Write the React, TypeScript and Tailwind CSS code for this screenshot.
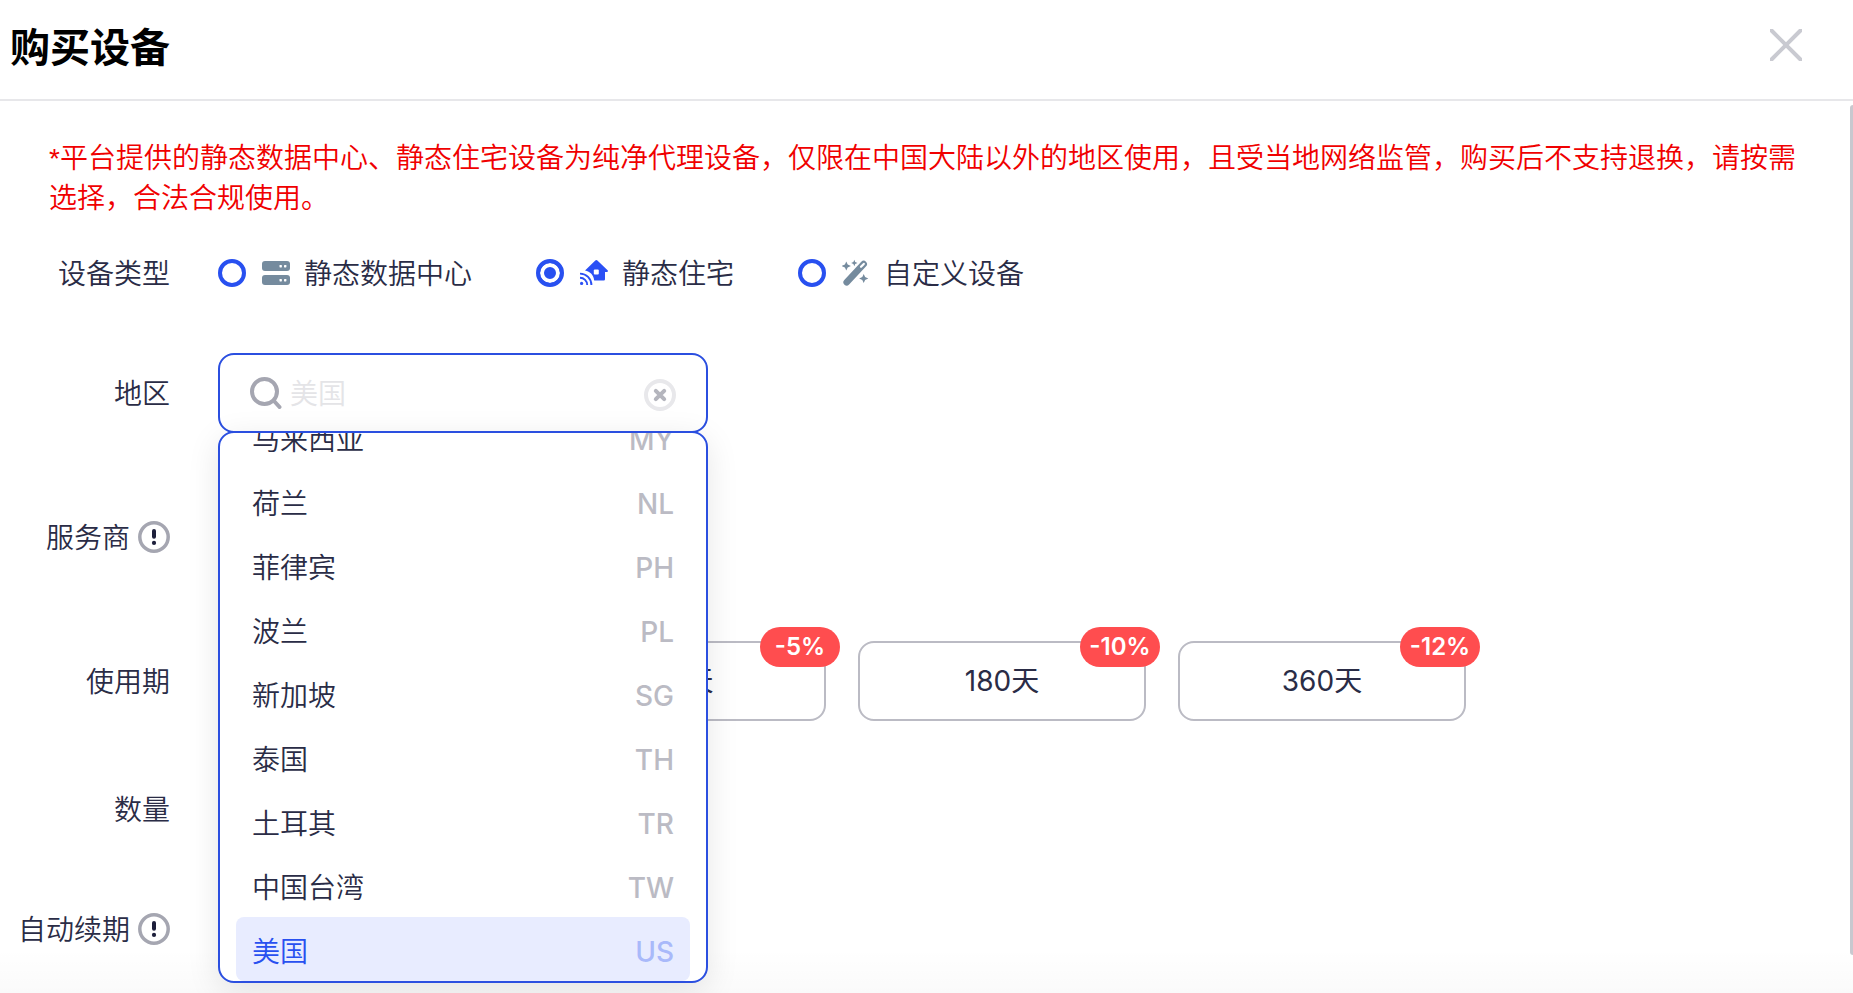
import React from "react";

const countries = [
  { name: "马来西亚", code: "MY" },
  { name: "荷兰", code: "NL" },
  { name: "菲律宾", code: "PH" },
  { name: "波兰", code: "PL" },
  { name: "新加坡", code: "SG" },
  { name: "泰国", code: "TH" },
  { name: "土耳其", code: "TR" },
  { name: "中国台湾", code: "TW" },
  { name: "美国", code: "US" },
];

const periods = [
  { label: "30天", discount: "" },
  { label: "90天", discount: "-5%" },
  { label: "180天", discount: "-10%" },
  { label: "360天", discount: "-12%" },
];

function ServerIcon() {
  return (
    <svg aria-hidden="true" className="size-7" viewBox="0 0 28 28">
      <rect x="0" y="2" width="28" height="10" rx="3" fill="#758b9e" />
      <rect x="0" y="16" width="28" height="10" rx="3" fill="#758b9e" />
      <g fill="#fff">
        <rect x="17.5" y="6" width="2.4" height="2.4" rx="0.6" />
        <rect x="22" y="6" width="2.4" height="2.4" rx="0.6" />
        <rect x="17.5" y="20" width="2.4" height="2.4" rx="0.6" />
        <rect x="22" y="20" width="2.4" height="2.4" rx="0.6" />
      </g>
    </svg>
  );
}

function HouseIcon() {
  return (
    <svg aria-hidden="true" className="size-7" viewBox="0 0 28 28">
      <path
        d="M15.3 1.5a1.5 1.5 0 0 1 2.1 0L27.6 11.3c.6.6.2 1.7-.7 1.7H25v7.2a1.2 1.2 0 0 1-1.2 1.2H14.2C13.6 16.2 10.3 12.4 5 11.5Z"
        fill="#2b50f5"
      />
      <rect x="13.8" y="10.6" width="5" height="5" rx="1" fill="#fff" />
      <circle cx="1.6" cy="24.4" r="1.6" fill="#2b50f5" />
      <g fill="none" stroke="#2b50f5" strokeWidth="1.9">
        <path d="M0 18.8a7.2 7.2 0 0 1 7.2 7.2" />
        <path d="M0 14.6A11.4 11.4 0 0 1 11.4 26" />
      </g>
    </svg>
  );
}

function WandIcon() {
  return (
    <svg aria-hidden="true" className="size-7" viewBox="0 0 28 28">
      <path d="M4.7 23.3 21.7 5.1" stroke="#758b9e" strokeWidth="6.6" strokeLinecap="round" />
      <path d="m19 7.8 2.8-2.9" stroke="#fff" strokeWidth="2.2" strokeLinecap="round" />
      <g fill="#758b9e">
        <path d="M4.3 2.4 5.7 5.6 8.9 7 5.7 8.4 4.3 11.6 2.9 8.4-.3 7l3.2-1.4Z" />
        <path d="m12.3.8.9 2.3 2.3.9-2.3.9-.9 2.3-.9-2.3L9.1 4l2.3-.9Z" />
        <path d="m21.7 14.9 1.4 3.2 3.2 1.4-3.2 1.4-1.4 3.2-1.4-3.2-3.2-1.4 3.2-1.4Z" />
      </g>
    </svg>
  );
}

function InfoIcon() {
  return (
    <svg aria-hidden="true" className="size-8" viewBox="0 0 32 32">
      <circle cx="16" cy="16" r="14.2" fill="#fff" stroke="#a5a6b1" strokeWidth="3.5" />
      <path d="M16 10v5.8" stroke="#1d1f3b" strokeWidth="4" strokeLinecap="round" />
      <circle cx="16" cy="21.9" r="2.1" fill="#1d1f3b" />
    </svg>
  );
}

const deviceTypes = [
  { label: "静态数据中心", icon: <ServerIcon />, selected: false },
  { label: "静态住宅", icon: <HouseIcon />, selected: true },
  { label: "自定义设备", icon: <WandIcon />, selected: false },
];

function RowLabel({ text, info, htmlFor }: { text: string; info?: boolean; htmlFor?: string }) {
  return (
    <div className="flex w-[170px] shrink-0 items-center justify-end gap-2">
      <label htmlFor={htmlFor} className="pt-0.5 whitespace-nowrap">
        {text}
      </label>
      {info && (
        <button type="button" aria-label={text + "说明"}>
          <InfoIcon />
        </button>
      )}
    </div>
  );
}

export default function App() {
  return (
    <div className="flex h-screen flex-col overflow-hidden bg-white font-['Inter','Noto_Sans_CJK_SC',sans-serif] text-[28px] leading-10 font-[350] text-[#2a2c46]">
      <header className="flex h-[101px] shrink-0 items-center justify-between border-b-2 border-[#e7e7ea] pr-[51px] pb-1 pl-2.5">
        <h1 className="text-[40px] font-bold text-black">购买设备</h1>
        <button type="button" aria-label="关闭" className="mb-1.5">
          <svg aria-hidden="true" className="size-8" viewBox="0 0 32 32">
            <path d="M1.5 1.5l29 29M30.5 1.5l-29 29" stroke="#c9cad1" strokeWidth="4" strokeLinecap="round" />
          </svg>
        </button>
      </header>

      <main className="relative min-h-0 flex-1 overflow-hidden">
        <p className="px-[49px] pt-[38px] font-['Liberation_Sans','Noto_Sans_CJK_SC',sans-serif] text-[#f00000]">
          *平台提供的静态数据中心、静态住宅设备为纯净代理设备，仅限在中国大陆以外的地区使用，且受当地网络监管，购买后不支持退换，请按需选择，合法合规使用。
        </p>

        <form className="pt-[33px]">
          <div className="flex items-center gap-12">
            <RowLabel text="设备类型" />
            <div className="flex gap-16">
              {deviceTypes.map((type) => (
                <label key={type.label} className="flex items-center">
                  <input
                    type="radio"
                    name="device"
                    defaultChecked={type.selected}
                    className="mr-4 size-7 appearance-none rounded-full border-4 border-[#2850f0] checked:bg-[#2850f0] checked:shadow-[inset_0_0_0_4px_#fff]"
                  />
                  {type.icon}
                  <span className="ml-3.5 pt-0.5">{type.label}</span>
                </label>
              ))}
            </div>
          </div>

          <div className="mt-[59px] flex h-20 items-center gap-12">
            <RowLabel text="地区" htmlFor="region" />
            <div className="relative z-10 w-[490px]">
              <div className="flex h-20 items-center rounded-2xl border-2 border-[#2b4fe0] px-[30px]">
                <svg aria-hidden="true" className="size-8 shrink-0" viewBox="0 0 32 32">
                  <g fill="none" stroke="#a5a6b1" strokeWidth="4" strokeLinecap="round">
                    <circle cx="14.5" cy="14.5" r="12.5" />
                    <path d="m24 24 5.5 6" />
                  </g>
                </svg>
                <input
                  id="region"
                  type="text"
                  placeholder="美国"
                  className="ml-2 h-10 min-w-0 flex-1 bg-transparent pt-0.5 outline-none placeholder:text-[#e4e4e7]"
                />
                <button type="button" aria-label="清除" className="pt-1">
                  <svg aria-hidden="true" className="size-8" viewBox="0 0 32 32">
                    <circle cx="16" cy="16" r="14" fill="none" stroke="#e8e8eb" strokeWidth="4" />
                    <path d="m11.8 11.8 8.4 8.4m0-8.4-8.4 8.4" stroke="#b4b5bd" strokeWidth="4" strokeLinecap="round" />
                  </svg>
                </button>
              </div>

              <ul
                role="listbox"
                aria-label="地区"
                className="absolute inset-x-0 top-[78px] flex h-[552px] flex-col justify-end overflow-hidden rounded-2xl border-2 border-[#2b4fe0] bg-white px-4 shadow-[0_8px_32px_rgba(0,0,0,0.1)]"
              >
                {countries.map((country) => {
                  const selected = country.code === "US";
                  return (
                    <li
                      key={country.code}
                      role="option"
                      aria-selected={selected}
                      className={
                        selected
                          ? "flex h-16 shrink-0 items-center justify-between rounded-lg bg-[#e8ecff] px-4 pt-1.5 text-[#2850f0]"
                          : "flex h-16 shrink-0 items-center justify-between px-4 pt-1.5"
                      }
                    >
                      <span>{country.name}</span>
                      <span className={selected ? "font-medium text-[#a9b9fa]" : "font-medium text-[#bbbbc4]"}>
                        {country.code}
                      </span>
                    </li>
                  );
                })}
              </ul>
            </div>
          </div>

          <div className="mt-16 flex h-20 items-center">
            <RowLabel text="服务商" info />
          </div>

          <div className="mt-16 flex h-20 items-center gap-12">
            <RowLabel text="使用期" />
            <div className="flex gap-8">
              {periods.map((period) => (
                <button
                  key={period.label}
                  type="button"
                  className="relative h-20 w-72 rounded-2xl border-2 border-[#bbbbc4] font-normal"
                >
                  {period.label}
                  {period.discount && (
                    <span className="absolute -top-4 -right-4 flex h-10 w-20 items-center justify-center rounded-full bg-[#ff4d4f] text-2xl font-semibold text-white">
                      {period.discount}
                    </span>
                  )}
                </button>
              ))}
            </div>
          </div>

          <div className="mt-12 flex h-20 items-center">
            <RowLabel text="数量" />
          </div>

          <div className="mt-10 flex h-20 items-center">
            <RowLabel text="自动续期" info />
          </div>
        </form>

        <div className="pointer-events-none absolute inset-x-0 bottom-0 h-11 bg-linear-to-b from-transparent to-black/2" />
        <div className="absolute top-1 right-0 bottom-[38px] w-[3px] rounded-l-sm bg-[#c8c8cf]" />
      </main>
    </div>
  );
}
